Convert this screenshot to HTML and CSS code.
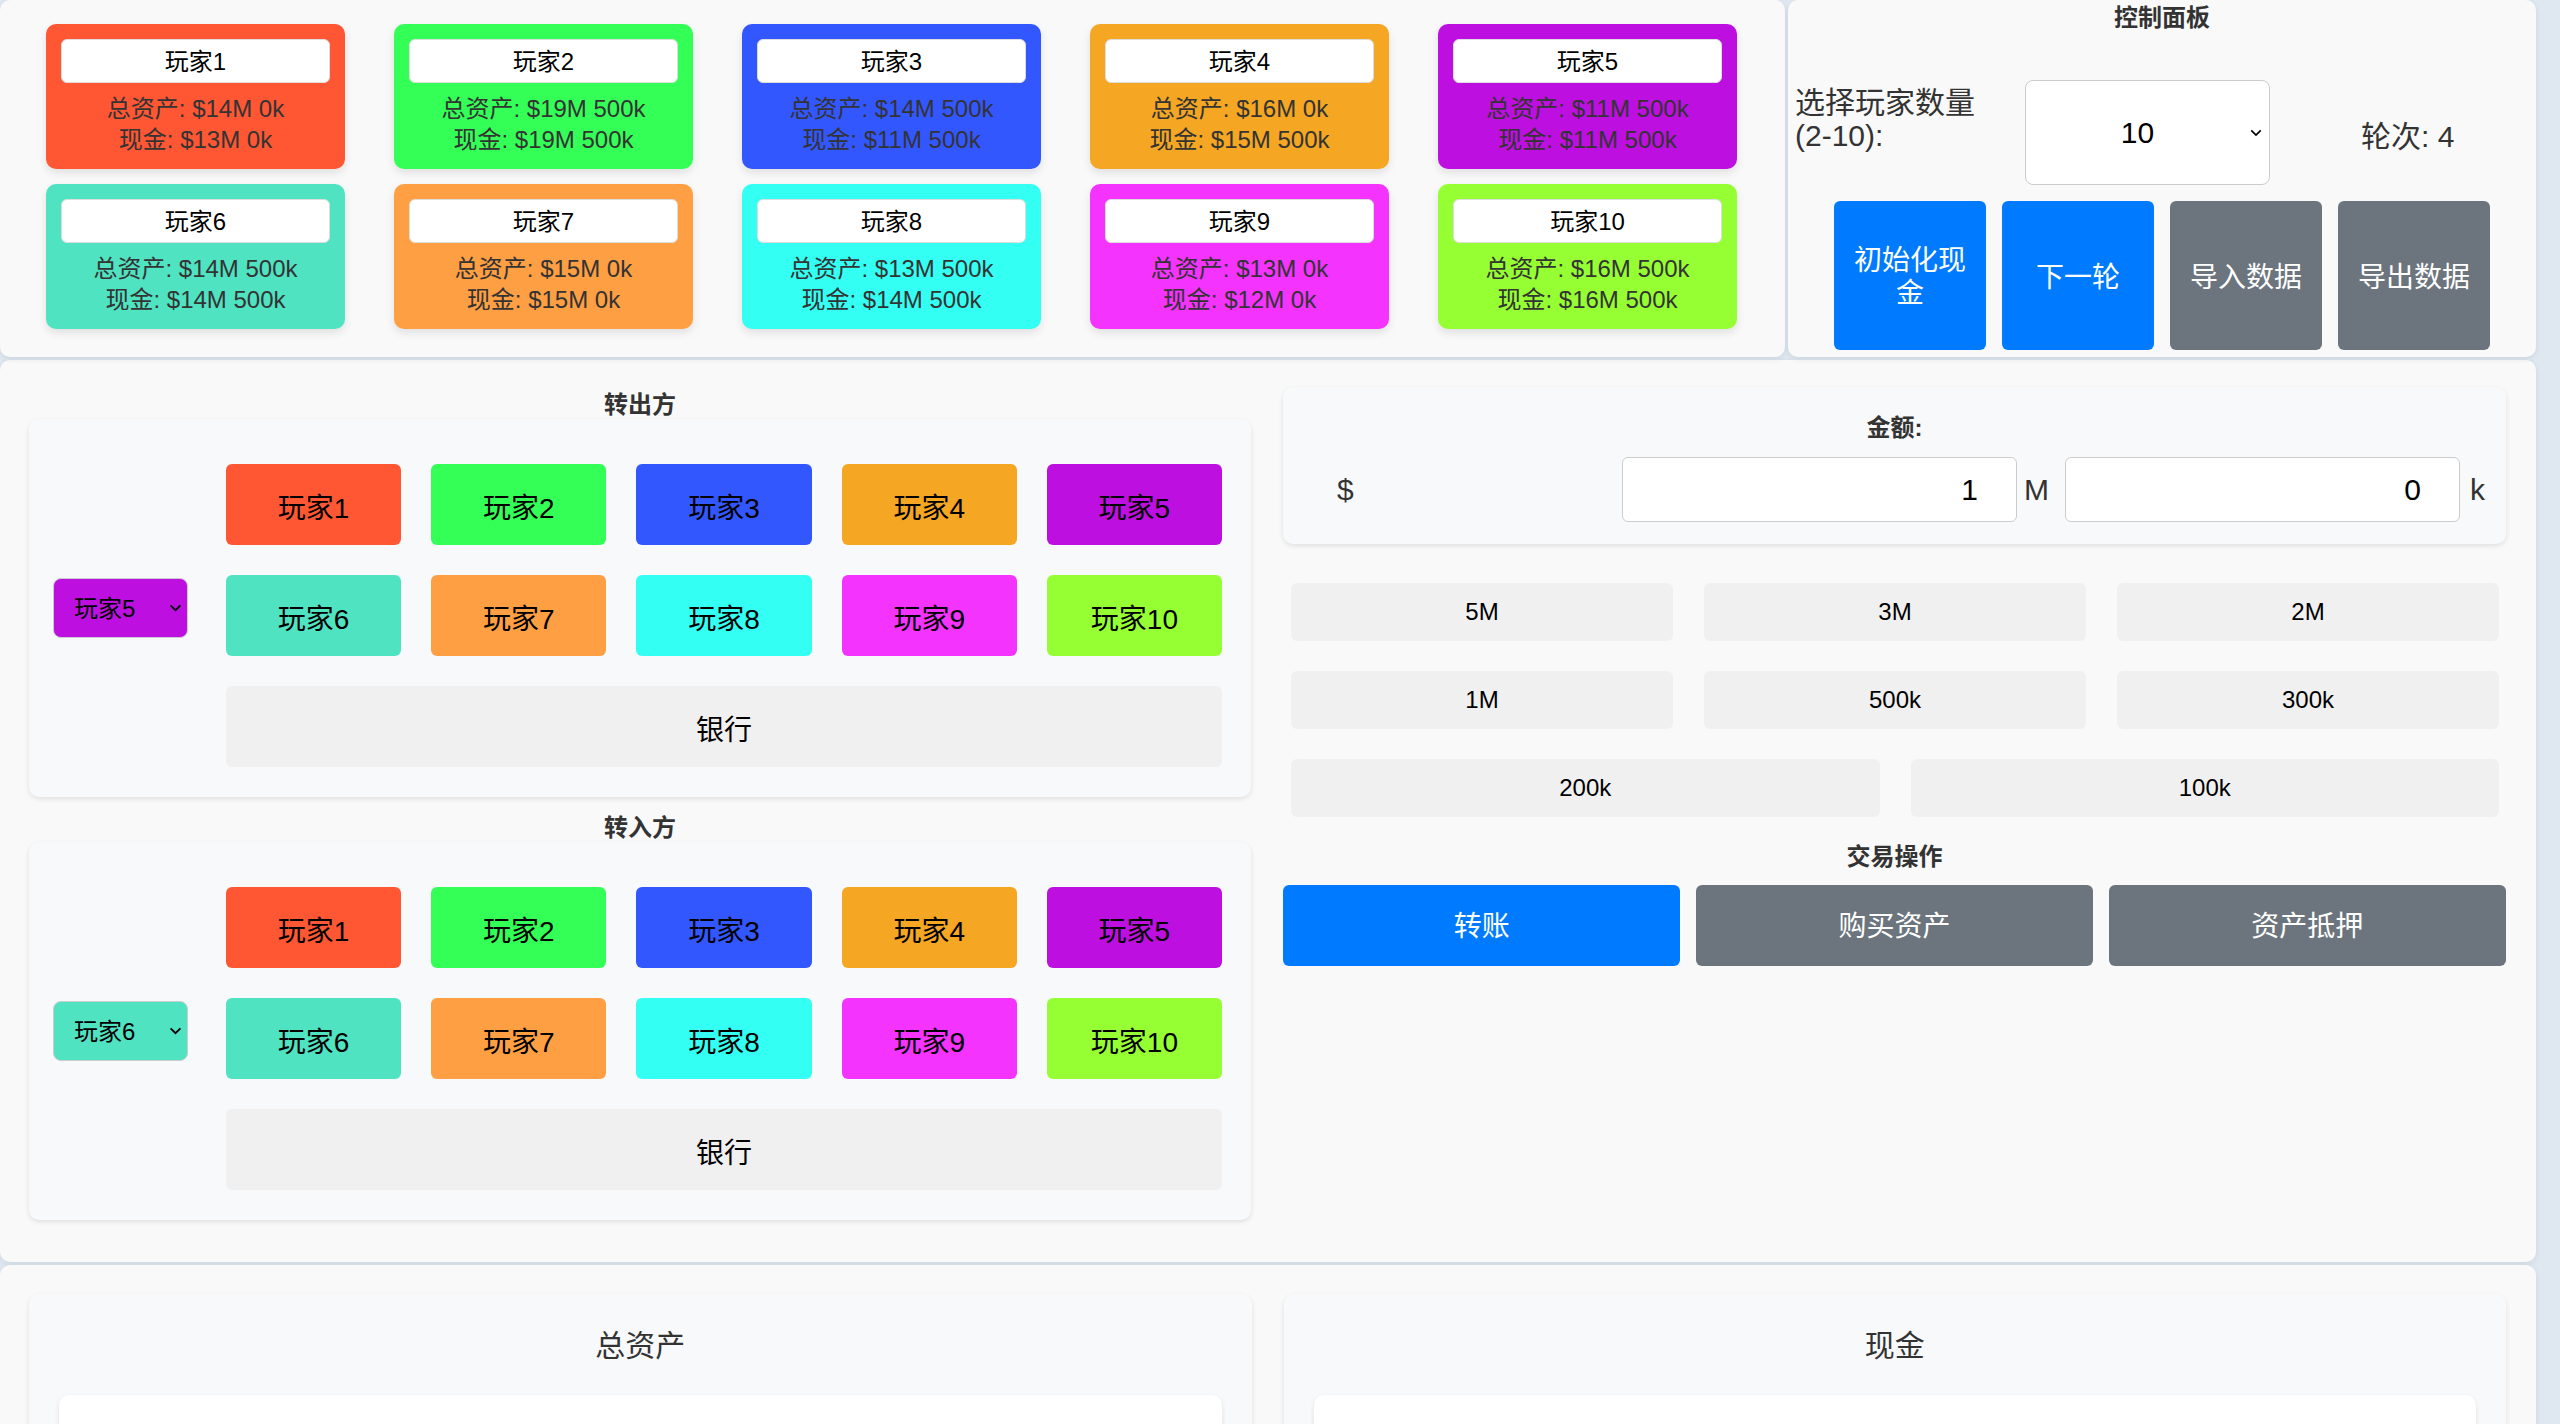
FILE: index.html
```html
<!DOCTYPE html>
<html>
<head>
    <meta charset="utf-8">
    <title>大富翁记账</title>
    <link rel="stylesheet" href="styles.css">
</head>
<body>
<div class="page">
    <div class="top">
        <div class="players-panel">
            <div class="player-grid">
                <div class="player-card p1">
                    <div class="player-name">玩家1</div>
                    <div class="player-info">总资产: $14M 0k</div>
                    <div class="player-info">现金: $13M 0k</div>
                </div>
                <div class="player-card p2">
                    <div class="player-name">玩家2</div>
                    <div class="player-info">总资产: $19M 500k</div>
                    <div class="player-info">现金: $19M 500k</div>
                </div>
                <div class="player-card p3">
                    <div class="player-name">玩家3</div>
                    <div class="player-info">总资产: $14M 500k</div>
                    <div class="player-info">现金: $11M 500k</div>
                </div>
                <div class="player-card p4">
                    <div class="player-name">玩家4</div>
                    <div class="player-info">总资产: $16M 0k</div>
                    <div class="player-info">现金: $15M 500k</div>
                </div>
                <div class="player-card p5">
                    <div class="player-name">玩家5</div>
                    <div class="player-info">总资产: $11M 500k</div>
                    <div class="player-info">现金: $11M 500k</div>
                </div>
                <div class="player-card p6">
                    <div class="player-name">玩家6</div>
                    <div class="player-info">总资产: $14M 500k</div>
                    <div class="player-info">现金: $14M 500k</div>
                </div>
                <div class="player-card p7">
                    <div class="player-name">玩家7</div>
                    <div class="player-info">总资产: $15M 0k</div>
                    <div class="player-info">现金: $15M 0k</div>
                </div>
                <div class="player-card p8">
                    <div class="player-name">玩家8</div>
                    <div class="player-info">总资产: $13M 500k</div>
                    <div class="player-info">现金: $14M 500k</div>
                </div>
                <div class="player-card p9">
                    <div class="player-name">玩家9</div>
                    <div class="player-info">总资产: $13M 0k</div>
                    <div class="player-info">现金: $12M 0k</div>
                </div>
                <div class="player-card p10">
                    <div class="player-name">玩家10</div>
                    <div class="player-info">总资产: $16M 500k</div>
                    <div class="player-info">现金: $16M 500k</div>
                </div>
            </div>
        </div>

        <div class="control-panel">
            <h3>控制面板</h3>
            <div class="control-row">
                <label for="playerCount">选择玩家数量(2-10):</label>
                <select id="playerCount">
                    <option>2</option><option>3</option><option>4</option>
                    <option>5</option><option>6</option><option>7</option>
                    <option>8</option><option>9</option>
                    <option selected>10</option>
                </select>
                <span class="round">轮次: 4</span>
            </div>
            <div class="control-buttons">
                <button class="btn btn-blue">初始化现金</button>
                <button class="btn btn-blue">下一轮</button>
                <button class="btn btn-gray">导入数据</button>
                <button class="btn btn-gray">导出数据</button>
            </div>
        </div>
    </div>

    <div class="middle">
        <div class="transfer-col">
            <h3 class="section-title">转出方</h3>
            <div class="transfer-card">
                <select class="player-select p5">
                    <option>玩家1</option><option>玩家2</option><option>玩家3</option>
                    <option>玩家4</option><option selected>玩家5</option><option>玩家6</option>
                    <option>玩家7</option><option>玩家8</option><option>玩家9</option>
                    <option>玩家10</option>
                </select>
                <div class="choice-grid">
                    <button class="choice p1">玩家1</button>
                    <button class="choice p2">玩家2</button>
                    <button class="choice p3">玩家3</button>
                    <button class="choice p4">玩家4</button>
                    <button class="choice p5">玩家5</button>
                    <button class="choice p6">玩家6</button>
                    <button class="choice p7">玩家7</button>
                    <button class="choice p8">玩家8</button>
                    <button class="choice p9">玩家9</button>
                    <button class="choice p10">玩家10</button>
                    <button class="choice bank">银行</button>
                </div>
            </div>

            <h3 class="section-title second">转入方</h3>
            <div class="transfer-card">
                <select class="player-select p6">
                    <option>玩家1</option><option>玩家2</option><option>玩家3</option>
                    <option>玩家4</option><option>玩家5</option><option selected>玩家6</option>
                    <option>玩家7</option><option>玩家8</option><option>玩家9</option>
                    <option>玩家10</option>
                </select>
                <div class="choice-grid">
                    <button class="choice p1">玩家1</button>
                    <button class="choice p2">玩家2</button>
                    <button class="choice p3">玩家3</button>
                    <button class="choice p4">玩家4</button>
                    <button class="choice p5">玩家5</button>
                    <button class="choice p6">玩家6</button>
                    <button class="choice p7">玩家7</button>
                    <button class="choice p8">玩家8</button>
                    <button class="choice p9">玩家9</button>
                    <button class="choice p10">玩家10</button>
                    <button class="choice bank">银行</button>
                </div>
            </div>
        </div>

        <div class="amount-col">
            <div class="amount-card">
                <h3 class="section-title">金额:</h3>
                <div class="amount-row">
                    <span class="dollar">$</span>
                    <input type="text" class="amount-input" value="1">
                    <span class="unit unit-m">M</span>
                    <input type="text" class="amount-input" value="0">
                    <span class="unit unit-k">k</span>
                </div>
            </div>

            <div class="quick-row">
                <button class="quick">5M</button>
                <button class="quick">3M</button>
                <button class="quick">2M</button>
            </div>
            <div class="quick-row">
                <button class="quick">1M</button>
                <button class="quick">500k</button>
                <button class="quick">300k</button>
            </div>
            <div class="quick-row">
                <button class="quick">200k</button>
                <button class="quick">100k</button>
            </div>

            <h3 class="section-title trade-title">交易操作</h3>
            <div class="action-row">
                <button class="btn btn-blue">转账</button>
                <button class="btn btn-gray">购买资产</button>
                <button class="btn btn-gray">资产抵押</button>
            </div>
        </div>
    </div>

    <div class="bottom">
        <div class="chart-card">
            <h3>总资产</h3>
            <div class="chart-box"></div>
        </div>
        <div class="chart-card">
            <h3>现金</h3>
            <div class="chart-box"></div>
        </div>
    </div>
</div>
</body>
</html>
```

FILE: styles.css
```css
html {
    background-color: #f9f9f9;
}

body {
    margin: 0;
    background-color: #dfe8f1;
    font-family: "Liberation Sans", "Noto Sans CJK SC", sans-serif;
    color: #333;
}

::-webkit-scrollbar {
    width: 15px;
}

::-webkit-scrollbar-track {
    background-color: #f1f1f1;
}

::-webkit-scrollbar-thumb {
    background-color: #8b8b8b;
    border-radius: 8px;
    border: 3px solid #f1f1f1;
}

.page {
    width: 2536px;
}

button,
select,
input {
    font-family: inherit;
}

/* panels */
.top {
    display: flex;
    gap: 3px;
}

.players-panel,
.control-panel,
.middle,
.bottom {
    background-color: #f9f9f9;
    border-radius: 10px;
    box-shadow: 0 2px 6px rgba(0, 0, 0, 0.08);
}

.players-panel {
    width: 1785px;
    height: 357px;
    box-sizing: border-box;
    padding: 24px 0 0 46px;
}

.player-grid {
    display: grid;
    grid-template-columns: repeat(5, 299px);
    column-gap: 49px;
    row-gap: 15px;
}

.player-card {
    height: 145px;
    box-sizing: border-box;
    padding: 15px;
    border-radius: 10px;
    box-shadow: 0 4px 8px rgba(0, 0, 0, 0.1);
    text-align: center;
}

.player-name {
    height: 44px;
    line-height: 44px;
    box-sizing: border-box;
    background-color: #fff;
    border: 1px solid #ddd;
    border-radius: 6px;
    font-size: 24px;
    color: #000;
    margin-bottom: 10px;
}

.player-info {
    font-size: 24px;
    line-height: 31px;
    color: #333;
}

/* player colours */
.p1 { background-color: #ff5733; }
.p2 { background-color: #33ff57; }
.p3 { background-color: #3357ff; }
.p4 { background-color: #f5a623; }
.p5 { background-color: #bd10e0; }
.p6 { background-color: #50e3c2; }
.p7 { background-color: #ff9f43; }
.p8 { background-color: #33fff3; }
.p9 { background-color: #f533ff; }
.p10 { background-color: #96ff33; }

/* control panel */
.control-panel {
    width: 748px;
    height: 357px;
    box-sizing: border-box;
    padding-top: 3px;
}

.control-panel h3 {
    margin: 0;
    font-size: 24px;
    line-height: 30px;
    text-align: center;
}

.control-row {
    display: flex;
    align-items: center;
    margin-top: 47px;
    padding-left: 7px;
    height: 105px;
}

.control-row label {
    width: 200px;
    margin-right: 30px;
    font-size: 30px;
    line-height: 33px;
    padding-bottom: 28px;
}

select {
    appearance: none;
    background-image: url("data:image/svg+xml,%3Csvg xmlns='http://www.w3.org/2000/svg' width='14' height='9' viewBox='0 0 14 9'%3E%3Cpath d='M1.5 1.5l5.5 5.5 5.5-5.5' fill='none' stroke='%23000' stroke-width='2'/%3E%3C/svg%3E");
    background-repeat: no-repeat;
    border: 1px solid #ccc;
    border-radius: 8px;
    color: #000;
}

#playerCount {
    width: 245px;
    height: 105px;
    font-size: 30px;
    text-align: center;
    padding-right: 20px;
    background-color: #fff;
    background-position: right 7px center;
    background-size: 12px 8px;
    margin-right: 91px;
}

.round {
    font-size: 30px;
    padding-top: 3px;
}

.control-buttons {
    display: flex;
    justify-content: center;
    gap: 16px;
    margin-top: 16px;
}

.btn {
    border: none;
    border-radius: 6px;
    color: #fff;
    font-size: 28px;
    line-height: 33px;
    cursor: pointer;
}

.control-buttons .btn {
    width: 152px;
    height: 149px;
    padding: 3px 20px 0;
}

.btn-blue {
    background-color: #007bff;
}

.btn-gray {
    background-color: #6c757d;
}

/* transfer area */
.middle {
    display: flex;
    gap: 32px;
    margin-top: 3px;
    padding: 0 30px 42px 29px;
}

.transfer-col {
    width: 1222px;
}

.amount-col {
    flex: 1;
}

.section-title {
    margin: 31px 0 0;
    font-size: 24px;
    line-height: 28px;
    text-align: center;
    color: #333;
}

.section-title.second {
    margin-top: 17px;
}

.transfer-card {
    display: flex;
    align-items: center;
    gap: 38px;
    padding: 45px 29px 30px 24px;
    background-color: #f8f9fa;
    border-radius: 10px;
    box-shadow: 0 2px 5px rgba(0, 0, 0, 0.1);
}

.player-select {
    width: 135px;
    height: 60px;
    padding-left: 20px;
    font-size: 24px;
    background-position: right 5px center;
    background-size: 13px 8px;
    margin-bottom: 15px;
}

.choice-grid {
    flex: 1;
    display: grid;
    grid-template-columns: repeat(5, 1fr);
    gap: 30px;
}

.choice {
    height: 81px;
    padding-top: 3px;
    border: none;
    border-radius: 6px;
    font-size: 28px;
    color: #000;
    cursor: pointer;
}

.choice.bank {
    grid-column: 1 / -1;
    background-color: #f0f0f0;
}

/* amount area */
.amount-card {
    margin-top: 27px;
    padding: 27px 0 22px;
    background-color: #f8f9fa;
    border-radius: 10px;
    box-shadow: 0 2px 5px rgba(0, 0, 0, 0.1);
}

.amount-card .section-title {
    margin: 0 0 15px;
}

.amount-row {
    display: flex;
    align-items: center;
    padding: 0 21px 0 54px;
}

.dollar {
    flex: 1;
    font-size: 30px;
}

.amount-input {
    width: 395px;
    height: 65px;
    box-sizing: border-box;
    padding-right: 38px;
    text-align: right;
    font-size: 30px;
    color: #000;
    border: 1px solid #ccc;
    border-radius: 6px;
    background-color: #fff;
}

.unit {
    font-size: 30px;
}

.unit-m {
    margin: 0 16px 0 7px;
}

.unit-k {
    margin-left: 10px;
}

.quick-row {
    display: flex;
    gap: 31px;
    padding: 0 7px 0 8px;
    margin-top: 30px;
}

.amount-card + .quick-row {
    margin-top: 39px;
}

.quick {
    flex: 1;
    height: 58px;
    border: none;
    border-radius: 6px;
    background-color: #f0f0f0;
    font-size: 24px;
    color: #000;
    cursor: pointer;
}

.trade-title {
    margin: 26px 0 14px;
}

.action-row {
    display: flex;
    gap: 15.5px;
}

.action-row .btn {
    flex: 1;
    height: 81px;
    padding-top: 3px;
}

/* charts */
.bottom {
    display: flex;
    gap: 32px;
    margin-top: 3px;
    padding: 29px 30px 40px 29px;
}

.chart-card {
    flex: 1;
    padding: 34px 30px 30px;
    background-color: #f8f9fa;
    border-radius: 10px;
    box-shadow: 0 2px 5px rgba(0, 0, 0, 0.1);
}

.chart-card h3 {
    margin: 0 0 31px;
    font-size: 30px;
    line-height: 36px;
    font-weight: normal;
    text-align: center;
}

.chart-box {
    height: 500px;
    background-color: #fff;
    border-radius: 10px;
    box-shadow: 0 2px 5px rgba(0, 0, 0, 0.1);
}
```
